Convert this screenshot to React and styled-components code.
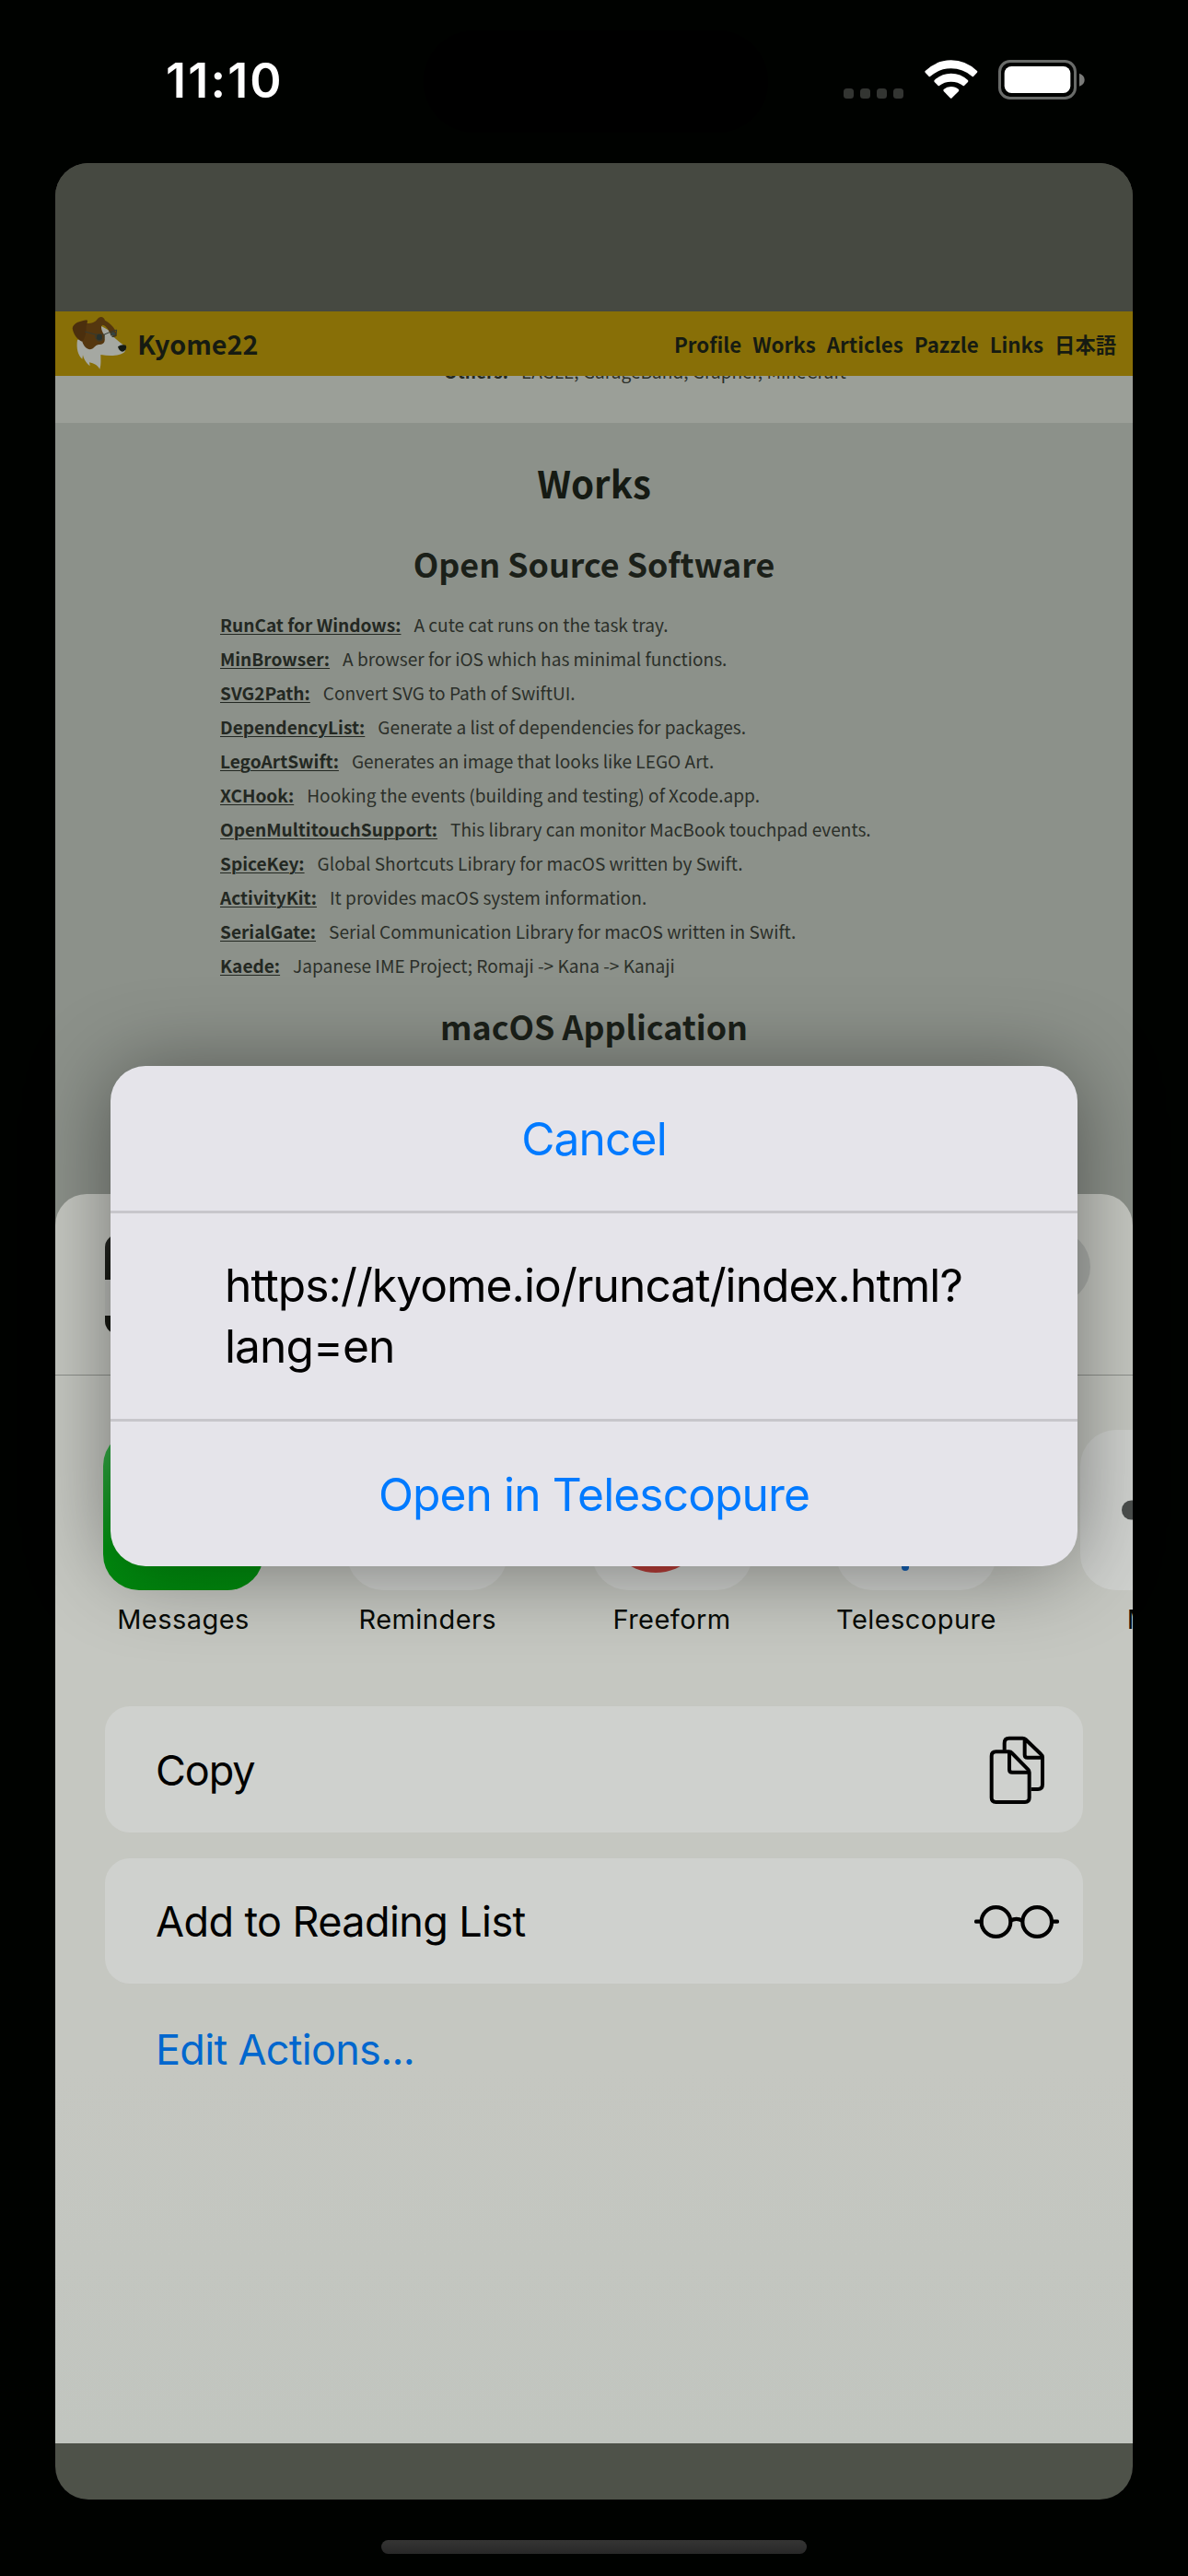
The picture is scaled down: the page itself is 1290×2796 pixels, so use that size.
import React from 'react';
import styled, { createGlobalStyle } from 'styled-components';

const GlobalStyle = createGlobalStyle`
  * { box-sizing: border-box; }
  html, body { margin: 0; padding: 0; background: #000200; }
  svg { flex: none; display: block; }
`;

const ui = `Inter, "Liberation Sans", sans-serif`;
const web = `"Noto Sans CJK JP", "Noto Sans", sans-serif`;

const Screen = styled.div`
  position: relative;
  width: 1290px;
  height: 2796px;
  display: flex;
  flex-direction: column;
  align-items: center;
  overflow: hidden;
  background: #000200;
  font-family: ${ui};
  color: #000;
`;

const StatusBar = styled.header`
  width: 100%;
  height: 177px;
  flex: none;
  display: flex;
  align-items: flex-start;
  padding: 33px 0 0 180px;
`;

const Time = styled.time`
  width: 280px;
  margin-top: 25px;
  font-size: 52px;
  font-weight: 600;
  line-height: 60px;
  letter-spacing: 2.2px;
  color: #fff;
`;

const Island = styled.div`
  width: 374px;
  height: 111px;
  border-radius: 56px;
  background: #000;
`;

const StatusIcons = styled.div`
  display: flex;
  gap: 22.5px;
  height: 43px;
  margin: 32px 0 0 82px;
`;

const Dots = styled.div`
  display: flex;
  align-items: flex-end;
  gap: 7px;
  padding-bottom: 1px;
`;

const Dot = styled.i`
  width: 11px;
  height: 11px;
  border-radius: 3.5px;
  background: #333532;
`;

const Card = styled.main`
  position: relative;
  width: 1170px;
  height: 2536px;
  flex: none;
  display: flex;
  flex-direction: column;
  border-radius: 36px;
  overflow: hidden;
  background: #4e5249;
`;

const TopBand = styled.div`
  height: 161px;
  flex: none;
  background: #464941;
`;

const SiteNav = styled.nav`
  height: 70px;
  flex: none;
  display: flex;
  align-items: center;
  justify-content: space-between;
  padding: 0 18px 1px;
  background: #886f07;
  font-family: ${web};
  font-weight: 700;
  color: #161b12;
`;

const Brand = styled.div`
  display: flex;
  align-items: center;
  gap: 10px;
  font-size: 28.7px;
  line-height: 40px;
`;

const NavLinks = styled.div`
  display: flex;
  gap: 12px;
  font-size: 22.3px;
  line-height: 40px;
`;

const Strip = styled.div`
  height: 51px;
  flex: none;
  overflow: hidden;
  padding-left: 422px;
  background: #9b9f98;
`;

const Works = styled.section`
  height: 2193px;
  flex: none;
  padding: 35px 179px 0;
  background: #8c918a;
  font-family: ${web};
`;

const Heading = styled.h1`
  margin: 0 -100px;
  font-size: 40.2px;
  font-weight: 700;
  line-height: 60px;
  text-align: center;
  color: #151a13;
`;

const SubHeading = styled.h2`
  margin: ${p => p.$top}px -100px 0;
  font-size: 35.8px;
  font-weight: 700;
  line-height: 52px;
  text-align: center;
  color: #1b2019;
`;

const ProjectList = styled.div`
  display: flex;
  flex-direction: column;
  margin-top: 23px;
`;

const Project = styled.div`
  display: flex;
  gap: 14px;
  margin-top: ${p => p.$lift || 0}px;
  font-family: ${web};
  font-size: 19.1px;
  line-height: 37.03px;
  white-space: nowrap;
  color: #2b2f29;
`;

const ProjectName = styled.b`
  font-weight: 700;
  color: #232822;
  text-decoration: ${p => (p.$plain ? 'none' : 'underline')};
  text-decoration-thickness: 1.4px;
  text-underline-offset: 2px;
`;

const Sheet = styled.section`
  position: absolute;
  left: 0;
  right: 0;
  top: 1119px;
  height: 1356px;
  display: flex;
  flex-direction: column;
  overflow: hidden;
  border-radius: 34px 34px 0 0;
  background: linear-gradient(#c5c7c1 0%, #c5c7c1 70%, #c1c5bf 100%);
`;

const SheetHeader = styled.div`
  height: 197px;
  flex: none;
  display: flex;
  justify-content: space-between;
  padding: 44px 46px 0 54px;
  border-bottom: 1px solid #8d908b;
`;

const PageThumb = styled.div`
  width: 108px;
  height: 108px;
  border-radius: 14px;
  background: linear-gradient(#262824 0, #191b15 49px, #bdbfbb 49px, #bdbfbb 88px, #191b15 88px);
`;

const CloseDisc = styled.div`
  width: 80px;
  height: 80px;
  margin-top: -5px;
  border-radius: 50%;
  background: #aeb1ad;
`;

const AppRow = styled.div`
  display: flex;
  gap: 91.3px;
  padding: 59px 0 0 52px;
`;

const AppItem = styled.div`
  width: 174px;
  flex: none;
  display: flex;
  flex-direction: column;
  align-items: center;
  gap: 14px;
`;

const AppIcon = styled.div`
  width: 174px;
  height: 174px;
  border-radius: 39px;
  overflow: hidden;
  background: ${p => p.$fill || '#cfd1ce'};
`;

const AppLabel = styled.span`
  font-size: 29px;
  line-height: 36px;
  letter-spacing: 0.45px;
  white-space: nowrap;
  color: #070b06;
`;

const Actions = styled.div`
  display: flex;
  flex-direction: column;
  gap: 28px;
  margin: 76px 54px 0;
`;

const Action = styled.div`
  height: 136.6px;
  display: flex;
  align-items: center;
  justify-content: space-between;
  padding: 2px 26px 0 55px;
  border-radius: 27px;
  background: #cfd1ce;
  font-size: 45px;
  letter-spacing: ${p => p.$track}px;
`;

const ActionIcon = styled.span`
  width: 92px;
  display: flex;
  justify-content: center;
`;

const EditActions = styled.a`
  margin: 14px 0 0 55px;
  font-size: 45px;
  line-height: 60px;
  letter-spacing: -0.7px;
  color: #0067ce;
`;

const Dialog = styled.div`
  position: absolute;
  left: 120px;
  top: 1157px;
  width: 1050px;
  height: 543px;
  display: flex;
  flex-direction: column;
  border-radius: 38px;
  background: #e5e4ea;
  box-shadow: 0 4px 92px rgba(0, 0, 0, 0.42);
`;

const DialogButton = styled.button`
  height: 157px;
  padding: 0;
  border: 0;
  background: none;
  font-family: ${ui};
  font-size: 49.7px;
  letter-spacing: ${p => p.$track}px;
  color: #007aff;
`;

const DialogMessage = styled.p`
  height: 229px;
  margin: 0;
  padding: 45px 0 0 124px;
  border-top: 3px solid #c7c6cb;
  border-bottom: 3px solid #c7c6cb;
  font-size: 49.7px;
  line-height: 66px;
  letter-spacing: -0.95px;
  white-space: pre-line;
`;

const HomeBar = styled.div`
  width: 462px;
  height: 15px;
  flex: none;
  margin-top: 44px;
  border-radius: 8px;
  background: linear-gradient(#353534, #282828);
`;

const WifiIcon = () => (
  <svg width="58" height="43" viewBox="431 75 174 129" fill="#fff">
    <path d="M433 111 Q470 76 517 76 Q565 76 602 111 Q604 113 602 116 L590 129 Q588 131 586 129 Q556 103 517 103 Q479 103 449 129 Q447 131 445 129 L433 116 Q431 113 433 111Z" />
    <path d="M463 141 Q486 119 517 119 Q549 119 572 141 Q574 144 572 147 L560 159 Q558 161 556 159 Q540 146 517 146 Q495 146 479 159 Q477 161 475 159 L463 147 Q461 144 463 141Z" />
    <path d="M493 171 Q503 162 517 162 Q532 162 542 171 Q544 174 542 177 L520 199 Q517 202 514 199 L493 177 Q491 174 493 171Z" />
  </svg>
);

const BatteryIcon = () => (
  <svg width="96" height="43" viewBox="672 75 288 129">
    <rect x="676.5" y="79.5" width="246" height="120" rx="34" fill="none" stroke="#696b69" strokeWidth="9" />
    <rect x="692" y="96" width="215" height="87" rx="23" fill="#fff" />
    <path d="M936 119 Q953 125 953 140 Q953 155 936 161Z" fill="#7a7b79" />
  </svg>
);

const DogLogo = () => (
  <svg width="61.3" height="58.7" viewBox="114 70 184 176">
    <path d="M132 148 C128 175 134 198 148 210 L150 197 C154 215 164 226 173 233 L171 221 C186 224 199 231 205 243 C210 228 208 212 208 196 C240 202 272 200 286 187 L292 172 C270 156 245 138 233 116 L205 100 L150 140Z" fill="#a5a8a2" />
    <path d="M160 94 C174 95 190 92 198 79 C205 70 218 70 222 84 C243 96 259 114 261 134 C256 141 248 138 243 131 C234 118 226 100 215 99 C206 101 211 116 217 128 C226 148 222 165 201 163 C188 165 187 178 172 179 C158 176 150 162 147 150Z" fill="#55370f" />
    <path d="M116 110 C119 93 139 87 163 83 C168 88 162 94 161 105 C161 126 157 145 147 153 C132 148 119 130 116 110Z" fill="#4b2f0d" />
    <path d="M157 121 L191 130 H220 L239 122 L260 115 M191 130 Q190 151 205 151 Q221 149 220 130 M240 122 Q240 138 250 138 Q260 134 260 115" fill="none" stroke="#343a31" strokeWidth="3" />
    <circle cx="204" cy="139" r="9.5" fill="#26322f" />
    <circle cx="249" cy="128" r="6.5" fill="#344442" />
    <path d="M264 170 Q276 161 290 165 Q294 172 290 179 Q282 190 273 184 Q265 178 264 170Z" fill="#141912" />
  </svg>
);

const DocsIcon = () => (
  <svg width="60.7" height="74.3" viewBox="100 70 182 223" fill="none" stroke="#000" strokeWidth="12" strokeLinejoin="round">
    <path d="M165 122 H122 Q108 122 108 136 V272 Q108 286 122 286 H217 Q231 286 231 272 V189 Q231 184 227 180 L175 127 Q171 122 165 122Z" />
    <path d="M166 124 V180 Q166 189 175 189 H231" />
    <path d="M150 117 V94 Q150 78 165 78 H209 Q215 78 219 82 L269 130 Q274 134 274 140 V228 Q274 244 259 244 H237 M216 81 V132 Q216 141 225 141 H273" />
  </svg>
);

const GlassesIcon = () => (
  <svg width="92" height="36" viewBox="54 621 276 108" fill="none" stroke="#000" strokeWidth="12.5">
    <circle cx="124.500" cy="675" r="47.500" />
    <circle cx="258.500" cy="675" r="47.500" />
    <path d="M172 671 Q191 660 210 671" />
    <path d="M60 674 H76 M307 674 H324" strokeLinecap="round" />
  </svg>
);

const FreeformArt = () => (
  <svg width="174" height="174"><circle cx="69" cy="99" r="56" fill="#b83d38" /></svg>
);

const TelescopureArt = () => (
  <svg width="174" height="174"><path d="M75 60 V149" stroke="#1560b4" strokeWidth="8" strokeLinecap="round" /></svg>
);

const MoreArt = () => (
  <svg width="174" height="174" fill="#4b4f4d">
    <circle cx="55.500" cy="87" r="10.500" />
    <circle cx="87" cy="87" r="10.500" />
    <circle cx="118.500" cy="87" r="10.500" />
  </svg>
);

const projects = [
  ['RunCat for Windows:', 'A cute cat runs on the task tray.'],
  ['MinBrowser:', 'A browser for iOS which has minimal functions.'],
  ['SVG2Path:', 'Convert SVG to Path of SwiftUI.'],
  ['DependencyList:', 'Generate a list of dependencies for packages.'],
  ['LegoArtSwift:', 'Generates an image that looks like LEGO Art.'],
  ['XCHook:', 'Hooking the events (building and testing) of Xcode.app.'],
  ['OpenMultitouchSupport:', 'This library can monitor MacBook touchpad events.'],
  ['SpiceKey:', 'Global Shortcuts Library for macOS written by Swift.'],
  ['ActivityKit:', 'It provides macOS system information.'],
  ['SerialGate:', 'Serial Communication Library for macOS written in Swift.'],
  ['Kaede:', 'Japanese IME Project; Romaji -> Kana -> Kanaji'],
];

const apps = [
  { name: 'Messages', fill: 'linear-gradient(#3cb04e, #00930f 75%, #008c0e)' },
  { name: 'Reminders' },
  { name: 'Freeform', art: <FreeformArt /> },
  { name: 'Telescopure', art: <TelescopureArt /> },
  { name: 'More', art: <MoreArt /> },
];

const links = ['Profile', 'Works', 'Articles', 'Pazzle', 'Links', '日本語'];

export default function App() {
  return (
    <>
      <GlobalStyle />
      <Screen>
        <StatusBar>
          <Time>11:10</Time>
          <Island />
          <StatusIcons>
            <Dots><Dot /><Dot /><Dot /><Dot /></Dots>
            <WifiIcon />
            <BatteryIcon />
          </StatusIcons>
        </StatusBar>

        <Card>
          <TopBand />
          <SiteNav>
            <Brand><DogLogo />Kyome22</Brand>
            <NavLinks>
              {links.map(t => <span key={t}>{t}</span>)}
            </NavLinks>
          </SiteNav>
          <Strip>
            <Project $lift={-23}>
              <ProjectName $plain>Others:</ProjectName>
              <span>EAGLE, GarageBand, Grapher, MineCraft</span>
            </Project>
          </Strip>
          <Works>
            <Heading>Works</Heading>
            <SubHeading $top={31}>Open Source Software</SubHeading>
            <ProjectList>
              {projects.map(([name, text]) => (
                <Project key={name}>
                  <ProjectName>{name}</ProjectName>
                  <span>{text}</span>
                </Project>
              ))}
            </ProjectList>
            <SubHeading $top={20}>macOS Application</SubHeading>
          </Works>

          <Sheet>
            <SheetHeader>
              <PageThumb />
              <CloseDisc />
            </SheetHeader>
            <AppRow>
              {apps.map(a => (
                <AppItem key={a.name}>
                  <AppIcon $fill={a.fill}>{a.art}</AppIcon>
                  <AppLabel>{a.name}</AppLabel>
                </AppItem>
              ))}
            </AppRow>
            <Actions>
              <Action $track={-1.1}>Copy<ActionIcon><DocsIcon /></ActionIcon></Action>
              <Action $track={-0.6}>Add to Reading List<ActionIcon><GlassesIcon /></ActionIcon></Action>
              <EditActions>Edit Actions...</EditActions>
            </Actions>
          </Sheet>
        </Card>

        <HomeBar />
        <Dialog>
          <DialogButton $track={-0.9}>Cancel</DialogButton>
          <DialogMessage>{'https://kyome.io/runcat/index.html?\nlang=en'}</DialogMessage>
          <DialogButton $track={-0.9}>Open in Telescopure</DialogButton>
        </Dialog>
      </Screen>
    </>
  );
}
